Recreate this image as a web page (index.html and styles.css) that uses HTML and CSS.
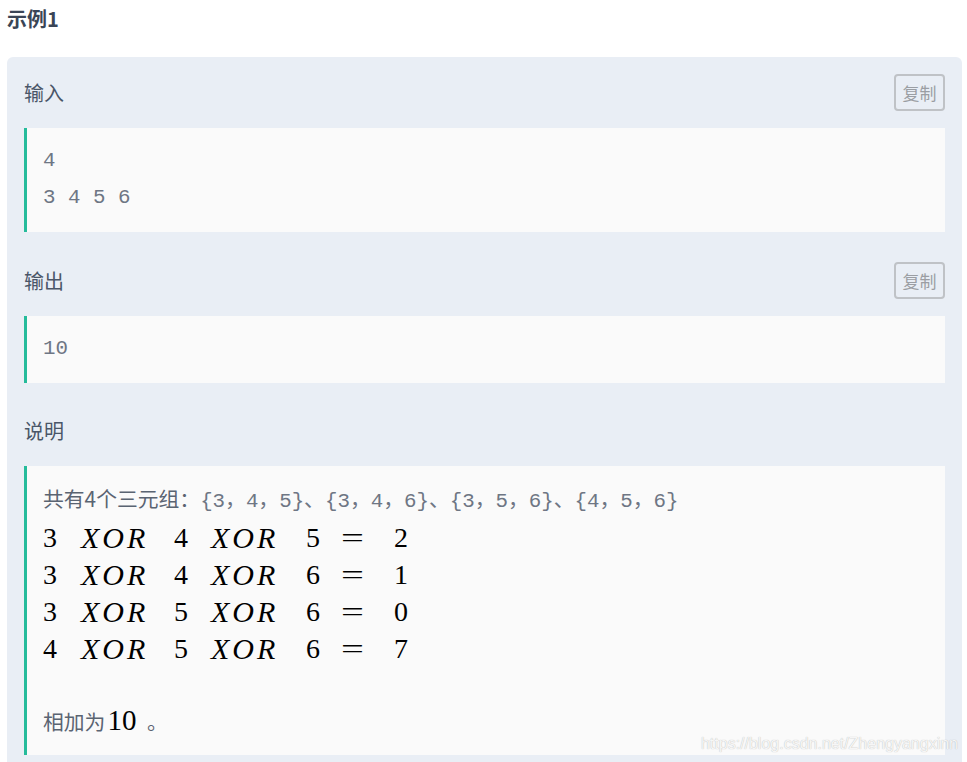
FILE: index.html
```html
<!DOCTYPE html>
<html lang="zh-CN">
<head>
<meta charset="utf-8">
<title>示例1</title>
<link rel="stylesheet" href="styles.css">
</head>
<body>
<div class="page">
  <h3 class="title">示例1</h3>
  <div class="panel">
    <div class="section">
      <div class="sec-head">
        <span class="sec-label">输入</span>
        <button class="copy">复制</button>
      </div>
      <div class="code">
        <div class="line">4</div>
        <div class="line">3 4 5 6</div>
      </div>
    </div>
    <div class="section">
      <div class="sec-head">
        <span class="sec-label">输出</span>
        <button class="copy">复制</button>
      </div>
      <div class="code">
        <div class="line">10</div>
      </div>
    </div>
    <div class="section">
      <div class="sec-head">
        <span class="sec-label">说明</span>
      </div>
      <div class="code explain">
        <div class="line cn">共有4个三元组：<span class="mono">{3，4，5}、{3，4，6}、{3，5，6}、{4，5，6}</span></div>
        <div class="math">
          <div class="mrow"><span>3</span><span class="mi">XOR</span><span>4</span><span class="mi">XOR</span><span>5</span><span class="eq">=</span><span>2</span></div>
          <div class="mrow"><span>3</span><span class="mi">XOR</span><span>4</span><span class="mi">XOR</span><span>6</span><span class="eq">=</span><span>1</span></div>
          <div class="mrow"><span>3</span><span class="mi">XOR</span><span>5</span><span class="mi">XOR</span><span>6</span><span class="eq">=</span><span>0</span></div>
          <div class="mrow"><span>4</span><span class="mi">XOR</span><span>5</span><span class="mi">XOR</span><span>6</span><span class="eq">=</span><span>7</span></div>
        </div>
        <div class="line cn">相加为<span class="mnum">10</span> 。</div>
        <div class="watermark">https://blog.csdn.net/Zhengyangxinn</div>
      </div>
    </div>
  </div>
</div>
</body>
</html>
```

FILE: styles.css
```css
html, body {
  margin: 0;
  padding: 0;
  background: #ffffff;
}

.page {
  padding: 0 5px 0 7px;
  font-family: "Noto Sans CJK SC", "Liberation Sans", sans-serif;
}

.title {
  margin: 0 0 19px 0;
  height: 38px;
  line-height: 38px;
  font-size: 20px;
  font-weight: bold;
  color: #3a4556;
}

.panel {
  background: #e9eef5;
  border-radius: 6px;
  padding: 0 17px 30px 17px;
}

.section {
  padding-top: 12.5px;
}

.section:first-child {
  padding-top: 0;
}

.sec-head {
  display: flex;
  align-items: center;
  justify-content: space-between;
  height: 37px;
  padding: 17px 0;
}

.sec-label {
  font-size: 20px;
  color: #4a5668;
  line-height: 37px;
}

.copy {
  width: 51px;
  height: 37px;
  box-sizing: border-box;
  border: 2px solid #bfc2c6;
  border-radius: 4px;
  background: transparent;
  color: #9b9ea3;
  font-family: "Noto Sans CJK SC", sans-serif;
  font-size: 17px;
  padding: 0;
  line-height: 33px;
}

.code {
  position: relative;
  background: #fafafa;
  border-left: 3px solid #25bb9b;
  padding: 14px 16px 16px 16px;
  font-family: "Liberation Mono", "Noto Sans CJK SC", monospace;
  font-size: 20.8px;
  color: #6e7684;
}

.line {
  line-height: 37px;
  height: 37px;
  white-space: pre;
}

.cn {
  font-family: "Noto Sans CJK SC", sans-serif;
  font-size: 20.8px;
  color: #5a6472;
}

.mono {
  font-family: "Liberation Mono", "Noto Sans CJK SC", monospace;
  font-size: 20.8px;
  color: #6e7684;
}

.math {
  margin: 2px 0 35px 0;
  font-family: "Liberation Serif", serif;
  font-size: 28px;
  color: #000000;
}

.mrow {
  display: grid;
  grid-template-columns: 38px 93px 37px 95px 35px 53px auto;
  height: 37px;
  line-height: 37px;
}

.mi {
  font-style: italic;
  font-size: 30px;
  letter-spacing: 3px;
}

.eq {
  display: inline-block;
  transform: scaleX(1.45);
  transform-origin: left center;
}

.mnum {
  font-family: "Liberation Serif", serif;
  font-size: 29px;
  color: #000000;
  margin-left: 2px;
  margin-right: 6px;
}

.watermark {
  position: absolute;
  right: -13px;
  bottom: 2px;
  font-family: "Liberation Sans", sans-serif;
  font-size: 16px;
  color: #f6f6f6;
  text-shadow: 0 0 1px rgba(0, 0, 0, 0.3);
  white-space: nowrap;
}
```
